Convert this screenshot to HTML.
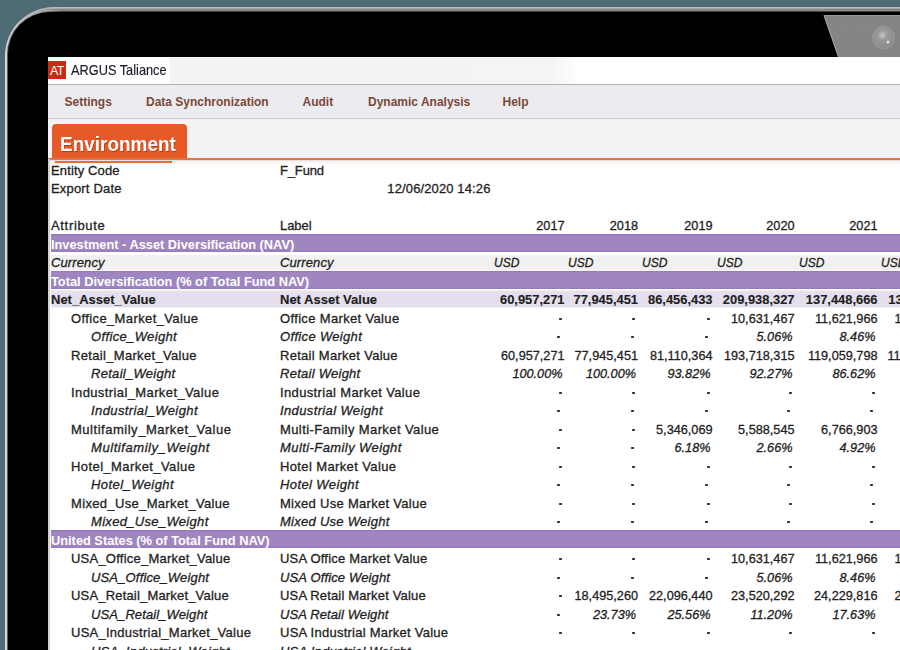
<!DOCTYPE html>
<html><head><meta charset="utf-8">
<style>
html,body{margin:0;padding:0;}
body{width:900px;height:650px;overflow:hidden;position:relative;background:#4f6b75;font-family:"Liberation Sans",sans-serif;}
#dev{position:absolute;left:5px;top:7px;width:1100px;height:900px;border-radius:49px;background:linear-gradient(90deg,#dadada 0,#d6d6d6 3px,#b0b0b0 30px);overflow:hidden;}
#dev::before{content:'';position:absolute;left:34px;top:0;width:100%;-webkit-mask-image:linear-gradient(90deg,transparent 0,#000 22px);height:5px;background:linear-gradient(#bcbcbc 0,#b8b8b8 1.2px,#7c7c7c 2.2px,#8e8e8e 3px,#909090 3.8px,#303030 4.6px);}
#devin{position:absolute;left:2.6px;top:4.6px;right:0;bottom:0;border-radius:42px 0 0 0;background:#000;box-shadow:-0.6px 0 0.8px #555;}
#cam{position:absolute;left:0;top:0;}
#scr{position:absolute;left:48px;top:57px;width:852px;height:593px;background:#fff;overflow:hidden;}
#title{position:absolute;left:0;top:0;width:100%;height:27px;background:#fff;}
#title .w{position:absolute;left:122px;top:0;width:410px;height:27px;background:linear-gradient(90deg,#f3f3f3 0,#f4f4f4 380px,#fff 410px);}
#logo{position:absolute;left:0;top:4px;width:18px;height:18px;background:#c92c14;color:#fff;font-size:12.5px;line-height:20px;text-align:center;letter-spacing:-0.7px;text-indent:-0.5px;}
#apptitle{position:absolute;left:23px;top:4.2px;font-size:14.6px;line-height:18px;color:#1a1a2a;letter-spacing:0;transform:scaleX(0.875);transform-origin:0 0;-webkit-text-stroke:0.15px #1a1a2a;}
#tline{position:absolute;left:0;top:27px;width:100%;height:1px;background:#b0b0b4;}
#menu{position:absolute;left:0;top:28px;width:100%;height:33px;background:#ececf0;}
#menu span{position:absolute;top:9px;font-size:12px;font-weight:bold;color:#7a4838;line-height:16px;}
#mline{position:absolute;left:0;top:60.5px;width:100%;height:2px;background:#cbcbce;}
#tabs{position:absolute;left:0;top:62px;width:100%;height:39px;background:#f3f3f5;}
#tab{position:absolute;left:4px;top:5px;width:135px;height:35px;background:#e65a28;border-radius:4px 4px 0 0;}
#tab span{position:absolute;left:7.8px;top:8.5px;font-size:20.5px;font-weight:bold;color:#fff;line-height:22px;letter-spacing:0px;transform:scaleX(0.925);transform-origin:0 0;text-shadow:0.8px 0.8px 0.6px #b83a14;}
#oline{position:absolute;left:0;top:101px;width:100%;height:2px;background:#e07448;}
#gline{position:absolute;left:0;top:103px;width:100%;height:5px;background:linear-gradient(#dfe2e4 0,#dfe2e4 1px,#fcf0ea 1.5px,#fff 5px);}
#uline{position:absolute;left:7px;top:104px;width:117px;height:2px;background:#ec6a3a;}
#lline{position:absolute;left:0px;top:102px;width:1.5px;height:100%;background:#d2d2d2;}
.row{position:absolute;left:3px;right:0;height:18.5px;background-repeat:no-repeat;background-size:100% 17.5px;background-position:0 0;}
.row.band{background-image:linear-gradient(#9576b8 0,#9f86c1 2px,#9f86c1 16px,#9576b8 18px);background-size:100% 18px;background-position:0 0.3px;}
.row.cur{background-image:linear-gradient(#f1f1f1,#f1f1f1);background-size:100% 15.5px;background-position:0 2px;}
.row.nav{background-image:linear-gradient(#f3eff7,#e5dfed 2px,#e5dfed);background-size:100% 17.5px;background-position:0 0.5px;}
.t{position:absolute;top:0;white-space:nowrap;line-height:18.5px;padding-top:1.5px;color:#1e1e1e;font-size:13px;-webkit-text-stroke:0.3px #1e1e1e;}


.n{font-size:12.7px;letter-spacing:0;}
.band-t{-webkit-text-stroke:0;color:#fff;font-weight:bold;font-size:12.8px;letter-spacing:0;}
.nav .t{font-weight:bold;-webkit-text-stroke:0.15px #1e1e1e;}
.nav .a,.nav .l{letter-spacing:0;}
.nav .n{font-size:12.9px;}
.wt .t,.cur .t{font-style:italic;}
.usd{font-size:12px;}
.dash{position:absolute;top:9.6px;width:3px;height:2px;background:#2a2a2a;border-radius:0.8px;}
</style></head><body>
<div id="dev"><div id="devin"></div></div>
<svg id="cam" width="900" height="60" viewBox="0 0 900 60">
  <defs>
    <radialGradient id="lens" cx="0.45" cy="0.4" r="0.6">
      <stop offset="0" stop-color="#c8c8c8"/>
      <stop offset="0.35" stop-color="#9a9a9a"/>
      <stop offset="1" stop-color="#8a8a8a"/>
    </radialGradient>
  </defs>
  <polygon points="824,15.5 900,15.5 900,57 838.5,57" fill="#858585"/>
  <line x1="824" y1="15.5" x2="838.5" y2="57" stroke="#b0b0b0" stroke-width="1"/>
  <line x1="824" y1="15.5" x2="900" y2="15.5" stroke="#999" stroke-width="1"/>
  <circle cx="837" cy="28" r="0.45" fill="#a5a5a5"/><circle cx="842" cy="28" r="0.45" fill="#a5a5a5"/><circle cx="847" cy="28" r="0.45" fill="#a5a5a5"/><circle cx="852" cy="28" r="0.45" fill="#a5a5a5"/><circle cx="857" cy="28" r="0.45" fill="#a5a5a5"/><circle cx="862" cy="28" r="0.45" fill="#a5a5a5"/><circle cx="867" cy="28" r="0.45" fill="#a5a5a5"/><circle cx="872" cy="28" r="0.45" fill="#a5a5a5"/><circle cx="877" cy="28" r="0.45" fill="#a5a5a5"/>
  <circle cx="883.5" cy="37.5" r="11" fill="url(#lens)" stroke="#9c9c9c" stroke-width="1"/>
  <circle cx="888" cy="42" r="1.5" fill="#e0e0e0"/>
</svg>
<div id="scr">
  <div id="title"><div class="w"></div><div id="logo">AT</div><div id="apptitle">ARGUS Taliance</div></div>
  <div id="tline"></div>
  <div id="menu">
    <span style="left:16.5px">Settings</span>
    <span style="left:98px">Data Synchronization</span>
    <span style="left:254.5px">Audit</span>
    <span style="left:320px">Dynamic Analysis</span>
    <span style="left:454.5px">Help</span>
  </div>
  <div id="mline"></div>
  <div id="tabs"><div id="tab"><span>Environment</span></div></div>
  <div id="oline"></div>
  <div id="gline"></div>
  <div id="uline"></div>
  <div id="lline"></div>
<div class="row plain" style="top:103.0px"><div class="t a" style="left:0px;letter-spacing:0.126px;">Entity Code</div><div class="t l" style="left:229px;letter-spacing:-0.148px;">F_Fund</div></div>
<div class="row date" style="top:121.5px"><div class="t a" style="left:0px;letter-spacing:0.175px;">Export Date</div><div class="t n" style="right:409.5px;left:auto;font-size:13px;letter-spacing:0.12px">12/06/2020 14:26</div></div>
<div class="row plain" style="top:140.0px"></div>
<div class="row hdr" style="top:158.5px"><div class="t a" style="left:0px;letter-spacing:0.668px;">Attribute</div><div class="t l" style="left:229px;letter-spacing:-0.049px;">Label</div><div class="t n" style="right:335.5px">2017</div><div class="t n" style="right:262px">2018</div><div class="t n" style="right:187.5px">2019</div><div class="t n" style="right:105.5px">2020</div><div class="t n" style="right:22.5px">2021</div><div class="t n" style="right:-57px">2022</div></div>
<div class="row band" style="top:177.0px"><div class="t band-t" style="left:0px">Investment - Asset Diversification (NAV)</div></div>
<div class="row cur" style="top:195.5px"><div class="t a" style="left:0px;letter-spacing:0.109px;">Currency</div><div class="t l" style="left:229px;letter-spacing:0.109px;">Currency</div><div class="t usd" style="left:443px">USD</div><div class="t usd" style="left:517px">USD</div><div class="t usd" style="left:591px">USD</div><div class="t usd" style="left:666px">USD</div><div class="t usd" style="left:748px">USD</div><div class="t usd" style="left:830px">USD</div></div>
<div class="row band" style="top:214.0px"><div class="t band-t" style="left:0px">Total Diversification (% of Total Fund NAV)</div></div>
<div class="row nav" style="top:232.5px"><div class="t a" style="left:0px;">Net_Asset_Value</div><div class="t l" style="left:229px;">Net Asset Value</div><div class="t n" style="right:335.5px">60,957,271</div><div class="t n" style="right:262px">77,945,451</div><div class="t n" style="right:187.5px">86,456,433</div><div class="t n" style="right:105.5px">209,938,327</div><div class="t n" style="right:22.5px">137,448,666</div><div class="t n" style="right:-60px">138,321,004</div></div>
<div class="row mv" style="top:251.0px"><div class="t a" style="left:20px;letter-spacing:0.382px;">Office_Market_Value</div><div class="t l" style="left:229px;letter-spacing:0.342px;">Office Market Value</div><div class="dash" style="right:338.20000000000005px"></div><div class="dash" style="right:264.70000000000005px"></div><div class="dash" style="right:190.20000000000005px"></div><div class="t n" style="right:105.5px">10,631,467</div><div class="t n" style="right:22.5px">11,621,966</div><div class="t n" style="right:-57px">12,402,113</div></div>
<div class="row wt" style="top:269.5px"><div class="t a" style="left:40px;letter-spacing:0.360px;">Office_Weight</div><div class="t l" style="left:229px;letter-spacing:0.331px;">Office Weight</div><div class="dash" style="right:339.70000000000005px"></div><div class="dash" style="right:266.20000000000005px"></div><div class="dash" style="right:191.70000000000005px"></div><div class="t n" style="right:107.5px">5.06%</div><div class="t n" style="right:24.5px">8.46%</div></div>
<div class="row mv" style="top:288.0px"><div class="t a" style="left:20px;letter-spacing:0.323px;">Retail_Market_Value</div><div class="t l" style="left:229px;letter-spacing:0.283px;">Retail Market Value</div><div class="t n" style="right:335.5px">60,957,271</div><div class="t n" style="right:262px">77,945,451</div><div class="t n" style="right:187.5px">81,110,364</div><div class="t n" style="right:105.5px">193,718,315</div><div class="t n" style="right:22.5px">119,059,798</div><div class="t n" style="right:-57px">118,402,336</div></div>
<div class="row wt" style="top:306.5px"><div class="t a" style="left:40px;letter-spacing:0.292px;">Retail_Weight</div><div class="t l" style="left:229px;letter-spacing:0.263px;">Retail Weight</div><div class="t n" style="right:337.5px">100.00%</div><div class="t n" style="right:264px">100.00%</div><div class="t n" style="right:189.5px">93.82%</div><div class="t n" style="right:107.5px">92.27%</div><div class="t n" style="right:24.5px">86.62%</div></div>
<div class="row mv" style="top:325.0px"><div class="t a" style="left:20px;letter-spacing:0.393px;">Industrial_Market_Value</div><div class="t l" style="left:229px;letter-spacing:0.360px;">Industrial Market Value</div><div class="dash" style="right:338.20000000000005px"></div><div class="dash" style="right:264.70000000000005px"></div><div class="dash" style="right:190.20000000000005px"></div><div class="dash" style="right:108.20000000000005px"></div><div class="dash" style="right:25.200000000000045px"></div></div>
<div class="row wt" style="top:343.5px"><div class="t a" style="left:40px;letter-spacing:0.394px;">Industrial_Weight</div><div class="t l" style="left:229px;letter-spacing:0.371px;">Industrial Weight</div><div class="dash" style="right:339.70000000000005px"></div><div class="dash" style="right:266.20000000000005px"></div><div class="dash" style="right:191.70000000000005px"></div><div class="dash" style="right:109.70000000000005px"></div><div class="dash" style="right:26.700000000000045px"></div></div>
<div class="row mv" style="top:362.0px"><div class="t a" style="left:20px;letter-spacing:0.522px;">Multifamily_Market_Value</div><div class="t l" style="left:229px;letter-spacing:0.395px;">Multi-Family Market Value</div><div class="dash" style="right:338.20000000000005px"></div><div class="dash" style="right:264.70000000000005px"></div><div class="t n" style="right:187.5px">5,346,069</div><div class="t n" style="right:105.5px">5,588,545</div><div class="t n" style="right:22.5px">6,766,903</div></div>
<div class="row wt" style="top:380.5px"><div class="t a" style="left:40px;letter-spacing:0.566px;">Multifamily_Weight</div><div class="t l" style="left:229px;letter-spacing:0.416px;">Multi-Family Weight</div><div class="dash" style="right:339.70000000000005px"></div><div class="dash" style="right:266.20000000000005px"></div><div class="t n" style="right:189.5px">6.18%</div><div class="t n" style="right:107.5px">2.66%</div><div class="t n" style="right:24.5px">4.92%</div></div>
<div class="row mv" style="top:399.0px"><div class="t a" style="left:20px;letter-spacing:0.419px;">Hotel_Market_Value</div><div class="t l" style="left:229px;letter-spacing:0.377px;">Hotel Market Value</div><div class="dash" style="right:338.20000000000005px"></div><div class="dash" style="right:264.70000000000005px"></div><div class="dash" style="right:190.20000000000005px"></div><div class="dash" style="right:108.20000000000005px"></div><div class="dash" style="right:25.200000000000045px"></div></div>
<div class="row wt" style="top:417.5px"><div class="t a" style="left:40px;letter-spacing:0.434px;">Hotel_Weight</div><div class="t l" style="left:229px;letter-spacing:0.402px;">Hotel Weight</div><div class="dash" style="right:339.70000000000005px"></div><div class="dash" style="right:266.20000000000005px"></div><div class="dash" style="right:191.70000000000005px"></div><div class="dash" style="right:109.70000000000005px"></div><div class="dash" style="right:26.700000000000045px"></div></div>
<div class="row mv" style="top:436.0px"><div class="t a" style="left:20px;letter-spacing:0.338px;">Mixed_Use_Market_Value</div><div class="t l" style="left:229px;letter-spacing:0.287px;">Mixed Use Market Value</div><div class="dash" style="right:338.20000000000005px"></div><div class="dash" style="right:264.70000000000005px"></div><div class="dash" style="right:190.20000000000005px"></div><div class="dash" style="right:108.20000000000005px"></div><div class="dash" style="right:25.200000000000045px"></div></div>
<div class="row wt" style="top:454.5px"><div class="t a" style="left:40px;letter-spacing:0.319px;">Mixed_Use_Weight</div><div class="t l" style="left:229px;letter-spacing:0.272px;">Mixed Use Weight</div><div class="dash" style="right:339.70000000000005px"></div><div class="dash" style="right:266.20000000000005px"></div><div class="dash" style="right:191.70000000000005px"></div><div class="dash" style="right:109.70000000000005px"></div><div class="dash" style="right:26.700000000000045px"></div></div>
<div class="row band" style="top:473.0px"><div class="t band-t" style="left:0px">United States (% of Total Fund NAV)</div></div>
<div class="row mv" style="top:491.5px"><div class="t a" style="left:20px;letter-spacing:0.228px;">USA_Office_Market_Value</div><div class="t l" style="left:229px;letter-spacing:0.210px;">USA Office Market Value</div><div class="dash" style="right:338.20000000000005px"></div><div class="dash" style="right:264.70000000000005px"></div><div class="dash" style="right:190.20000000000005px"></div><div class="t n" style="right:105.5px">10,631,467</div><div class="t n" style="right:22.5px">11,621,966</div><div class="t n" style="right:-57px">12,402,113</div></div>
<div class="row wt" style="top:510.0px"><div class="t a" style="left:40px;letter-spacing:0.157px;">USA_Office_Weight</div><div class="t l" style="left:229px;letter-spacing:0.141px;">USA Office Weight</div><div class="dash" style="right:339.70000000000005px"></div><div class="dash" style="right:266.20000000000005px"></div><div class="dash" style="right:191.70000000000005px"></div><div class="t n" style="right:107.5px">5.06%</div><div class="t n" style="right:24.5px">8.46%</div></div>
<div class="row mv" style="top:528.5px"><div class="t a" style="left:20px;letter-spacing:0.179px;">USA_Retail_Market_Value</div><div class="t l" style="left:229px;letter-spacing:0.161px;">USA Retail Market Value</div><div class="dash" style="right:338.20000000000005px"></div><div class="t n" style="right:262px">18,495,260</div><div class="t n" style="right:187.5px">22,096,440</div><div class="t n" style="right:105.5px">23,520,292</div><div class="t n" style="right:22.5px">24,229,816</div><div class="t n" style="right:-57px">25,118,930</div></div>
<div class="row wt" style="top:547.0px"><div class="t a" style="left:40px;letter-spacing:0.105px;">USA_Retail_Weight</div><div class="t l" style="left:229px;letter-spacing:0.089px;">USA Retail Weight</div><div class="dash" style="right:339.70000000000005px"></div><div class="t n" style="right:264px">23.73%</div><div class="t n" style="right:189.5px">25.56%</div><div class="t n" style="right:107.5px">11.20%</div><div class="t n" style="right:24.5px">17.63%</div></div>
<div class="row mv" style="top:565.5px"><div class="t a" style="left:20px;letter-spacing:0.260px;">USA_Industrial_Market_Value</div><div class="t l" style="left:229px;letter-spacing:0.245px;">USA Industrial Market Value</div><div class="dash" style="right:338.20000000000005px"></div><div class="dash" style="right:264.70000000000005px"></div><div class="dash" style="right:190.20000000000005px"></div><div class="dash" style="right:108.20000000000005px"></div><div class="dash" style="right:25.200000000000045px"></div></div>
<div class="row wt" style="top:584.0px"><div class="t a" style="left:40px;letter-spacing:0.223px;">USA_Industrial_Weight</div><div class="t l" style="left:229px;letter-spacing:0.210px;">USA Industrial Weight</div><div class="dash" style="right:339.70000000000005px"></div><div class="dash" style="right:266.20000000000005px"></div><div class="dash" style="right:191.70000000000005px"></div><div class="dash" style="right:109.70000000000005px"></div><div class="dash" style="right:26.700000000000045px"></div></div>
</div>
</body></html>
